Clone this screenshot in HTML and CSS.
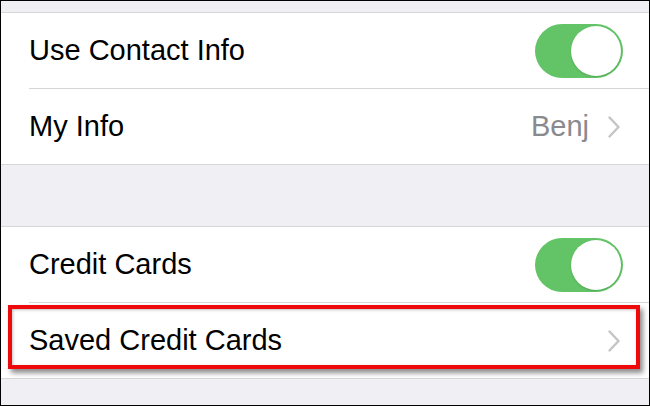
FILE: index.html
```html
<!DOCTYPE html>
<html>
<head>
<meta charset="utf-8">
<link rel="stylesheet" href="styles.css">
</head>
<body>
<div class="screen">
  <div class="top-gap"></div>
  <div class="group">
    <div class="row">
      <span class="label">Use Contact Info</span>
      <span class="toggle"><span class="knob"></span></span>
    </div>
    <div class="row">
      <span class="label">My Info</span>
      <span class="detail">Benj</span>
      <svg class="chev" width="12" height="22" viewBox="0 0 12 22"><polyline points="1.5,1.5 10.5,11 1.5,20.5" fill="none" stroke="#c4c4c8" stroke-width="2.4" stroke-linecap="round" stroke-linejoin="round"/></svg>
    </div>
  </div>
  <div class="mid-gap"></div>
  <div class="group">
    <div class="row">
      <span class="label">Credit Cards</span>
      <span class="toggle"><span class="knob"></span></span>
    </div>
    <div class="row highlighted">
      <span class="label">Saved Credit Cards</span>
      <svg class="chev" width="12" height="22" viewBox="0 0 12 22"><polyline points="1.5,1.5 10.5,11 1.5,20.5" fill="none" stroke="#c4c4c8" stroke-width="2.4" stroke-linecap="round" stroke-linejoin="round"/></svg>
      <span class="redbox"></span>
    </div>
  </div>
  <div class="bottom-gap"></div>
</div>
</body>
</html>
```
FILE: styles.css
```css
* { box-sizing: border-box; }
html, body { margin: 0; padding: 0; }
body { background: #000; }
.screen {
  width: 650px;
  height: 406px;
  border: 1px solid #000;
  background: #efeff4;
  font-family: "Liberation Sans", Arial, sans-serif;
  overflow: hidden;
  display: flex;
  flex-direction: column;
}
.top-gap { height: 11px; flex: none; }
.mid-gap { height: 61px; flex: none; }
.bottom-gap { flex: 1; }
.group {
  background: #fff;
  border-top: 1px solid #d6d6da;
  border-bottom: 1px solid #d6d6da;
  padding-left: 28px;
  flex: none;
}
.row {
  position: relative;
  height: 75px;
  display: flex;
  align-items: center;
  padding-right: 26px;
}
.row + .row { border-top: 1px solid #d6d6da; height: 76px; }
.label {
  font-size: 29px;
  color: #000;
  flex: 1;
}
.detail {
  font-size: 29px;
  color: #8a8a8e;
  margin-right: 19px;
}
.chev { margin-right: 3px; }
.toggle {
  width: 88px;
  height: 54px;
  border-radius: 27px;
  background: #62c466;
  position: relative;
  flex: none;
}
.knob {
  position: absolute;
  right: 2px;
  top: 2px;
  width: 50px;
  height: 50px;
  border-radius: 50%;
  background: #fff;
  box-shadow: 0 1px 2px rgba(0,0,0,0.15);
}
.redbox {
  position: absolute;
  left: -21px;
  top: 2px;
  width: 632px;
  height: 64px;
  border: 4px solid #ee0a0a;
  box-shadow: 3px 4px 5px rgba(0,0,0,0.45), inset 1px 1px 3px rgba(0,0,0,0.25);
}
```
